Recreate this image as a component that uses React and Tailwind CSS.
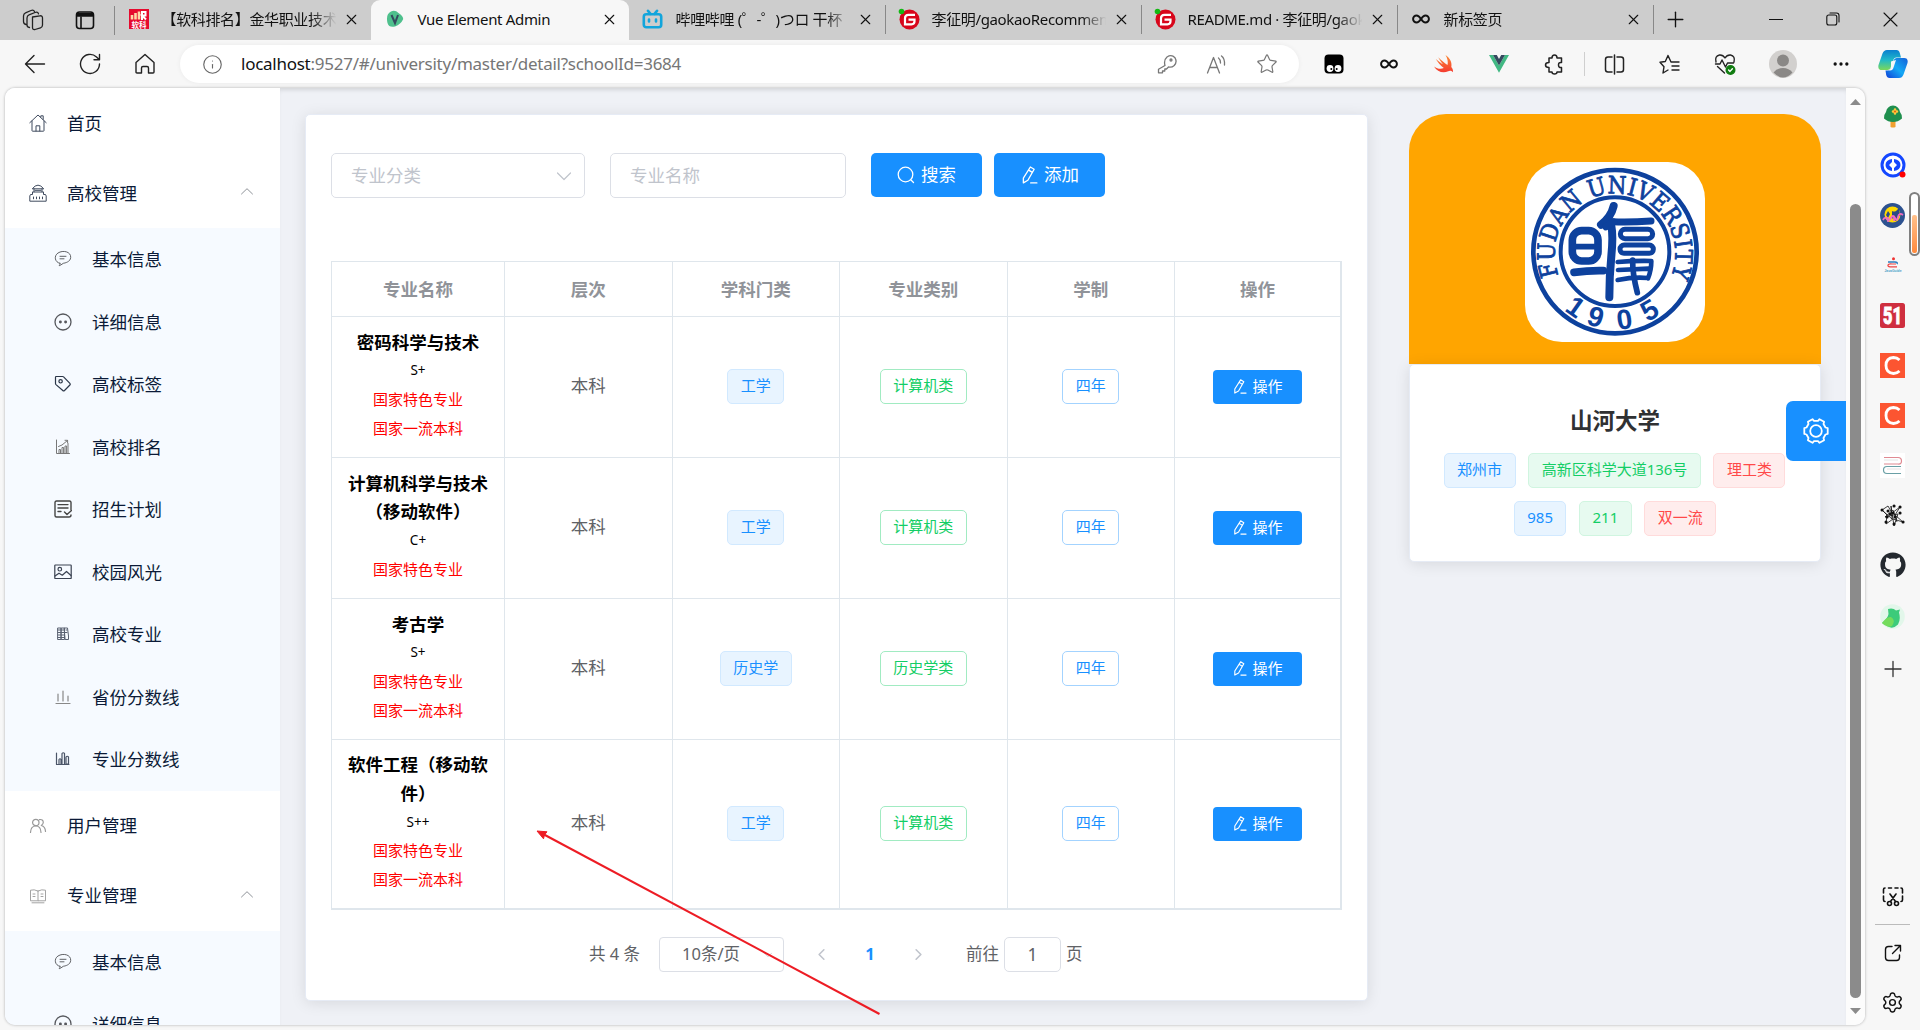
import React from 'react';
import {
  X, Plus, Info, Star, Ellipsis, Settings, ChevronDown, ChevronLeft, ChevronRight,
} from 'lucide-react';
import { FaGithub } from 'react-icons/fa';

/* ---------- generic line icon ---------- */
function Line({ size = 18, box = 18, sw = 1, color = 'currentColor', children, className }) {
  return (
    <svg width={size} height={size} viewBox={`0 0 ${box} ${box}`} fill="none" stroke={color} strokeWidth={sw}
      strokeLinecap="round" strokeLinejoin="round" className={className}>
      {children}
    </svg>
  );
}

/* ---------- sidebar icons ---------- */
const HomeI = () => (
  <Line color="#3f4a5e"><path d="M.8 8.7 9 1l8.2 7.7M3 7v9.6q0 .6.6.6h10.8q.6 0 .6-.6V7M11.8 3V1.8h2.4v3.6M7 17v-5.2h3.8V17" /></Line>
);
const SchoolI = () => (
  <Line color="#3f4a5e"><path d="M3.500 4.500Q9-2.500 14.500 4.500zM5 4.800v3M13 4.800v3M6 6.300h6M4 8h10M3.500 8.200v2.300H1.500L.8 12v5.200h16.400V12l-.7-1.500h-2V8.200M4.500 13v1.800M7.500 13v1.800M10.500 13v1.800M13.500 13v1.800" /></Line>
);
const ChatI = () => (
  <Line color="#606266"><path d="M6 13.300C.6 12.400-.3 5.800 4 3 9-.2 17 1.600 16.700 7.400 16.400 12 11 13 9.300 13.300 7.500 14.500 6 15.600 5.200 15.700c.6-.8.9-1.500.8-2.400M6 6.300h6M6 8.800h4" /></Line>
);
const DotsI = () => (
  <Line color="#55575c" sw={1.3}><circle cx="9" cy="9" r="8" /><circle cx="6.4" cy="9" r=".8" fill="#55575c" /><circle cx="11.6" cy="9" r=".8" fill="#55575c" /></Line>
);
const TagI = () => (
  <Line color="#2b3648" sw={1.2}><path d="M2.200 1.500H8.500q.7 0 1.100.4l6.300 6.400q.8.900 0 1.700l-5.400 5.500q-.9.800-1.700 0L2 9.600q-.5-.5-.5-1.100V2.200q0-.7.7-.7z" /><circle cx="6.600" cy="6.300" r="1.700" /></Line>
);
const RankI = () => (
  <Line color="#777"><path d="M2.500 2v13.500h13M5 15v-3.500h1.500V15M8 15V9.500h1.600V15M11 15V8h1.600v7M14 15V5.500M4.500 8.500 8 7l5.500-4.500M11 2.300h2.600v2.500" /></Line>
);
const PlanI = () => (
  <Line color="#444" sw={1.4}><path d="M17 10V2.500Q17 1 15.500 1h-13Q1 1 1 2.500v13Q1 17 2.500 17H15q2 0 2-2M4 4.600h10M4 8h10M4 11.500h3M10.500 12l2.500 2.500 4.500-4" /></Line>
);
const PicI = () => (
  <Line color="#3a4252" sw={1.2}><rect x=".8" y="2" width="16.400" height="13.500" rx=".6" /><circle cx="5.800" cy="6.200" r="1.800" /><path d="m1 13 4-2.800 3.300 2 4.200-3.700 4.500 4" /></Line>
);
const BooksI = () => (
  <Line color="#5a6272"><path d="M4 3h3v11.500H4zM7.500 3h3v11.500h-3zM10.500 3h3l1 8v3.500h-3zM4 5h6.500M4 7.500h9M4 10h6.500M4 12.500h6.500M12 5h1" /></Line>
);
const BarsI = () => (
  <Line color="#888" sw={1.200}><path d="M2 15.500h14M4 13V6M9 13V3M14 13V8" /></Line>
);
const ColsI = () => (
  <Line color="#4b5568" sw={1.200}><path d="M2.500 3v11.500h12.500M5 14V9.500q1-1.500 2 0V14M8 14V3.500q1.200-1.500 2.500 0V14M12 14V7q1.200-1.500 2.500 0v7z" /></Line>
);
const UsersI = () => (
  <Line color="#999" sw={1.200}><circle cx="6.800" cy="5.500" r="3.200" /><path d="M1.500 15.500q.3-6.500 5.300-6.500t5.200 6.500M10.500 2.600q3.500-.6 3.800 2.700 0 2-2 3.200 4 1 4.200 6" /></Line>
);
const BookI = () => (
  <Line color="#a3a3a3"><path d="M9 4Q5 2 1.500 3.200v10.600H9m0-9.800q4-2 7.500-.8v10.600H9V4M3 15.800h12M4 7h2M4 9.500h2M12 7h2M12 9.500h2" /></Line>
);

const sub1 = [
  [ChatI, '基本信息'], [DotsI, '详细信息'], [TagI, '高校标签'], [RankI, '高校排名'], [PlanI, '招生计划'],
  [PicI, '校园风光'], [BooksI, '高校专业'], [BarsI, '省份分数线'], [ColsI, '专业分数线'],
];

function Item({ Icon, text, arrow }) {
  return (
    <div className="flex h-[70px] shrink-0 items-center bg-white pl-6 pr-[26px]">
      <Icon />
      <span className="ml-5 grow">{text}</span>
      {arrow && <Line size={14} box={14} color="#8f9399" className="mb-1"><path d="m1.500 10 5.500-5.300L12.500 10" /></Line>}
    </div>
  );
}
function Sub({ Icon, text }) {
  return (
    <div className="flex h-[62.5px] shrink-0 items-center pl-[49px]">
      <Icon />
      <span className="ml-5">{text}</span>
    </div>
  );
}

function Sidebar() {
  return (
    <aside className="flex h-full w-[275px] shrink-0 flex-col overflow-hidden bg-[#f6faff] text-[17.5px] text-[#0b1a37]">
      <Item Icon={HomeI} text="首页" />
      <Item Icon={SchoolI} text="高校管理" arrow />
      {sub1.map(([I, t]) => <Sub key={t} Icon={I} text={t} />)}
      <Item Icon={UsersI} text="用户管理" />
      <Item Icon={BookI} text="专业管理" arrow />
      <Sub Icon={ChatI} text="基本信息" />
      <Sub Icon={DotsI} text="详细信息" />
    </aside>
  );
}

/* ---------- browser chrome ---------- */
function Rk() {
  return (
    <svg width="20" height="20" viewBox="0 0 20 20">
      <rect width="20" height="20" fill="#e60a2e" />
      <path d="M3 10.500V6M6.500 10.500V4M10 10.500V2.500" stroke="#ffd9a8" strokeWidth="2.600" />
      <path d="M13 11V3h3.500v3.500H13l4 4" stroke="#fff" strokeWidth="2" fill="none" />
      <text x="10" y="18.500" fontSize="7.500" fontWeight="700" textAnchor="middle" fill="#fff">软科</text>
    </svg>
  );
}
function VueDrop() {
  return (
    <svg width="18" height="18" viewBox="0 0 18 18">
      <path d="M5 1.500Q9-.5 12.500 3 18 7 17 9.500 15 14 9 16.500 3 18 1.500 13-.5 4 5 1.500z" fill="#4fc08d" />
      <path d="M5.500 5 9 13l3-8" fill="none" stroke="#35495e" strokeWidth="2" />
    </svg>
  );
}
function Bili() {
  return (
    <Line size={21} box={21} sw={2.600} color="#12a5dc"><rect x="1.800" y="5.300" width="17.400" height="13" rx="2.500" /><path d="m6 1.800 2.500 3M15 1.800l-2.500 3M7 10.500v2M14 10.500v2" /></Line>
  );
}
function Gitee() {
  return (
    <svg width="22" height="22" viewBox="0 0 22 22">
      <circle cx="11.500" cy="11.500" r="10" fill="#d8061b" />
      <path d="M17 6.800h-6.500q-3.500 0-3.500 3.500v6h6.500q3 0 3-3v-1.600h-6" fill="none" stroke="#fff" strokeWidth="2.200" />
      <circle cx="3.500" cy="3.500" r="2.800" fill="#14b814" />
    </svg>
  );
}
function Inf() {
  return <Line size={18} box={18} sw={2} color="#111"><path d="M9 9C7 6 5.800 5.500 4.600 5.500a3.500 3.500 0 0 0 0 7C5.800 12.500 7 12 9 9s3.200-3.500 4.400-3.500a3.500 3.500 0 0 1 0 7C12.200 12.500 11 12 9 9z" /></Line>;
}
function SwiftBird() {
  return (
    <svg width="20" height="20" viewBox="0 0 20 20">
      <defs><linearGradient id="swf" x1="0" y1="0" x2="0" y2="1"><stop offset="0" stopColor="#fb8a34" /><stop offset="1" stopColor="#f53b30" /></linearGradient></defs>
      <path d="M11.500 1C16 4 18.300 8.600 17.300 13c1.800 2.200 1.900 4.300 1.500 5.300-1.400-2-3.200-1.800-4.600-1.100C9.500 19.500 3 18 0 12.500c3.500 2.500 7 2.900 9.800 1.500C6.500 11.500 3.500 8 1.800 5c3 2.500 5.500 4.400 7.200 5.300C7.500 8.500 5 5 4.200 3.300c3 3 6.500 6 9.300 7.800C14.300 8 13.500 4.300 11.500 1z" fill="url(#swf)" />
    </svg>
  );
}

const tabs = [
  { I: Rk, t: '【软科排名】金华职业技术' },
  { I: VueDrop, t: 'Vue Element Admin', on: true },
  { I: Bili, t: '哔哩哔哩 (゜-゜)つロ 干杯' },
  { I: Gitee, t: '李征明/gaokaoRecommen', sep: true },
  { I: Gitee, t: 'README.md · 李征明/gaok', sep: true },
  { I: Inf, t: '新标签页', sep: true },
];

function TabBar() {
  return (
    <div className="flex h-10 shrink-0 items-end bg-[#cdcdcd] text-[15px] text-[#111]">
      <div className="flex h-full w-[115px] items-center pl-[22px]">
        <Line size={22} box={22} sw={1.300} color="#222"><path d="m10.500 8 7.500-1.200q2.500-.3 2.500 2.200v7q0 2.200-2 2.800l-5.500 1.700q-2.500.5-2.500-2zM7.500 18.500q-2.500-.3-2.500-2.500V9Q5 6.500 7 5.800L13 3.500q3-1 3.500 1.300M4 15.500Q1.500 15 1.500 12.500V7Q1.500 4.500 3.500 3.800L9 1.500q2.500-1 3.500 1" /></Line>
        <Line size={20} box={20} sw={1.600} color="#111" className="ml-[31px]"><rect x="1.500" y="2" width="17" height="16.500" rx="3" /><path d="M2.500 4h15v1.500h-15z" fill="#111" strokeWidth="2.500" /><path d="M6 7v11" /></Line>
        <div className="ml-[19px] h-[29px] w-px bg-[#888]" />
      </div>
      {tabs.map(({ I, t, on, sep }, i) => (
        <div key={i} className={on
          ? 'flex h-10 w-[258px] items-center rounded-t-[9px] bg-[#f7f7f7] pb-[2px]'
          : 'flex h-10 w-[256px] items-center pb-[2px]'}>
          <div className="flex w-[46.5px] items-center">
            <div className={sep ? 'h-[29px] w-px bg-[#888]' : 'h-6 w-px'} />
            <div className="flex w-[45.5px] justify-center"><I /></div>
          </div>
          <div className={on
            ? 'w-[180px] whitespace-nowrap tracking-[-0.33px]'
            : 'w-[178px] whitespace-nowrap tracking-[-0.35px] [mask-image:linear-gradient(to_right,#000_84%,transparent_98%)]'}>{t}</div>
          <div className="flex w-[24px] justify-center"><X size={17} strokeWidth={1.600} /></div>
        </div>
      ))}
      <div className="flex h-10 grow items-center pb-[2px]">
        <div className="h-[29px] w-px bg-[#888]" />
        <Plus size={25} strokeWidth={1.300} className="ml-[9px]" />
        <div className="flex grow items-center justify-end gap-[43px] pr-[22px]">
          <Line size={14} box={14} color="#111" sw={1.200}><path d="M.5 7.500h13" /></Line>
          <Line size={14} box={14} color="#111" sw={1.100}><rect x=".8" y="3" width="10" height="10" rx="2" /><path d="M4 1h6.500Q13 1 13 3.500V10" /></Line>
          <Line size={15} box={15} color="#111" sw={1.100}><path d="m1 1 13 13M14 1 1 14" /></Line>
        </div>
      </div>
    </div>
  );
}

const Slot = ({ children }) => <div className="flex w-[55px] shrink-0 items-center justify-center">{children}</div>;

function Toolbar() {
  return (
    <div className="flex h-12 shrink-0 items-center bg-[#f7f7f7] pl-[7px] text-[#222]">
      <Slot><Line size={22} box={22} sw={1.400}><path d="M20.500 11H1.500M10 2.500 1.500 11l8.500 8.500" /></Line></Slot>
      <Slot><Line size={22} box={22} sw={1.400}><path d="M20.500 11a9.500 9.500 0 1 1-3-7l2.700 2.500M20.500 1.500v5.300H15" /></Line></Slot>
      <Slot><Line size={22} box={22} sw={1.400}><path d="M2 9.500 11 1.500l9 8V19q0 1-1 1h-4.500v-5q0-1.500-1.500-1.500h-4Q7.500 13.500 7.500 15v5H3q-1 0-1-1z" /></Line></Slot>
      <div className="ml-2 flex h-[38px] w-[1119px] shrink-0 items-center rounded-full bg-white pl-[22px] pr-[21px] shadow-[0_0_5px_rgba(0,0,0,0.06)]">
        <Info size={21} strokeWidth={1.300} color="#666" />
        <span className="ml-[18px] grow whitespace-nowrap text-[17px] tracking-[-0.26px] text-[#767676]"><span className="text-[#111]">localhost</span>:9527/#/university/master/detail?schoolId=3684</span>
        <div className="flex items-center gap-[29px] text-[#777]">
          <Line size={20} box={20} sw={1.300}><path d="M8 11.500Q6.500 6 10 3q4.500-3 8 .8 2.500 4-.8 7.700-2.500 2.300-5.700 1.500L9.500 15H7.800v2H5.500v1.800H1.500v-3.500z" /><circle cx="14" cy="6" r="1" /></Line>
          <Line size={21} box={21} sw={1.300}><path d="M1.500 19 7.500 3.500 13.500 19M3.800 13.500h7.500M12.500 4q2 1.500 2 5M15.500 2q3.500 2.500 3 9" /></Line>
          <Star size={22} strokeWidth={1.300} />
        </div>
      </div>
      <div className="ml-[7px] flex grow items-center">
        <Slot>
          <svg width="20" height="20" viewBox="0 0 20 20"><rect x=".5" y=".5" width="19" height="19" rx="4" fill="#000" /><circle cx="6" cy="14.500" r="3.400" fill="#fff" /><circle cx="14" cy="14.500" r="3.400" fill="#fff" /><circle cx="7.300" cy="15" r="1" /><circle cx="12.700" cy="15" r="1" /></svg>
        </Slot>
        <Slot><Inf /></Slot>
        <Slot><SwiftBird /></Slot>
        <Slot>
          <svg width="20" height="18" viewBox="0 0 20 18"><path d="M0 0h4l6 10.500L16 0h4L10 17.800z" fill="#41b883" /><path d="M4 0h3.800L10 4l2.200-4H16l-6 10.500z" fill="#34495e" /></svg>
        </Slot>
        <Slot><Line size={21} box={21} sw={1.500} className="ml-[2px]"><path d="M5 4h3q0-3 2.500-3T13 4h4.500v4.500q-3-.5-3 2.500t3 2.500V18H13q0 2-2.500 2T8 18H5v-4.500q-3.500 0-3.500-2.500T5 8.500z" /></Line></Slot>
        <div className="mx-[2.500px] h-6 w-px bg-[#cfcfcf]" />
        <Slot><Line size={21} box={21} sw={1.500}><path d="M8 3H4Q1.500 3 1.500 5.500v10Q1.500 18 4 18h4M13 3h4q2.500 0 2.500 2.500v10q0 2.500-2.500 2.500h-4M10.500 1v19" /></Line></Slot>
        <Slot><Line size={21} box={21} sw={1.400}><path d="M12 8 9 1.500 6.300 7.500 1 8.200l4 4.500L4 19l5-3M12 8h8M13 12h7M13 16h7" /></Line></Slot>
        <Slot>
          <Line size={22} box={22} sw={1.400}><path d="M2 9Q.5 3 5.500 2q3.500-.3 5.500 3 2-3.300 5.500-3 5 1 3.500 7M1.500 11H6l2-4 3.500 7L13.500 10h6M3.500 13.500l7 6.500" /><circle cx="16.500" cy="17" r="4.300" fill="#107c10" stroke="#107c10" /><path d="m14.600 17 1.400 1.400 2.400-2.600" stroke="#fff" /></Line>
        </Slot>
        <div className="flex w-[61px] justify-center">
          <svg width="28" height="28" viewBox="0 0 28 28"><circle cx="14" cy="14" r="14" fill="#d2d0ce" /><circle cx="14" cy="10.500" r="6" fill="#8a8886" /><path d="M4.500 22.500Q8 18 14 18t9.500 4.500Q19 27.500 14 27.500t-9.500-5z" fill="#8a8886" /></svg>
        </div>
        <Slot><Ellipsis size={20} strokeWidth={2} color="#111" /></Slot>
        <div className="flex w-[50px] justify-center">
          <svg width="30" height="28" viewBox="0 0 30 28">
            <defs>
              <linearGradient id="cpa" x1="0" y1="0" x2="0" y2="1"><stop offset="0" stopColor="#0a7fd0" /><stop offset=".5" stopColor="#1fb9c8" /><stop offset="1" stopColor="#7bd85a" /></linearGradient>
              <linearGradient id="cpb" x1="0" y1="1" x2="1" y2="0"><stop offset="0" stopColor="#0f3fd8" /><stop offset=".5" stopColor="#14a9f5" /><stop offset="1" stopColor="#1560d8" /></linearGradient>
            </defs>
            <path d="M9 0h9.500q2.500 0 3.300 3L23 7.500H18q-2 0-3 3l-2.500 7.500q-.8 2-3 2H4q-4.500 0-3.500-5L4.500 3.500Q5.800 0 9 0z" fill="url(#cpa)" />
            <path d="M21 28H11.500q-2.500 0-3.300-3L7.500 20.500h2.500q2 0 3-3l2.500-7q.8-2.500 3-2.500H26q4.500 0 3.500 5L25.500 24.500Q24.200 28 21 28z" fill="url(#cpb)" />
            <path d="m13 11.500 5-1.500-2.800 8.500q-.8 2-3 2H10q2 0 3-3z" fill="#f7f7f7" />
          </svg>
        </div>
      </div>
    </div>
  );
}

/* ---------- main card ---------- */
const Pen = ({ size }) => (
  <Line size={size} box={16} sw={1.200}><path d="M9.200.9 12.600 2.900 7 12.700 3 15 3 10.700zM7.700 3.600l3.300 2M9.500 15h5.500" /></Line>
);

function STag({ kind, children }) {
  const base = 'flex h-[35px] items-center justify-center whitespace-nowrap rounded-[5px] border px-[12.5px] pb-[3px] text-[15px] ';
  const kinds = {
    blue: 'border-[#d1e9ff] bg-[#e8f4ff] text-[#1890ff]',
    green: 'border-[#d0f5e0] bg-[#e7faf0] text-[#13ce66]',
    red: 'border-[#ffdbdb] bg-[#ffeded] text-[#ff4949]',
    greenPlain: 'border-[#a1ebc2] bg-white text-[#13ce66]',
    bluePlain: 'border-[#a3d3ff] bg-white text-[#1890ff]',
  };
  return <span className={base + kinds[kind]}>{children}</span>;
}

const F = '国家特色专业';
const Y = '国家一流本科';
const rows = [
  { n: ['密码科学与技术'], g: 'S+', r: [F, Y], a: '工学', b: '计算机类', h: 'h-[141px]' },
  { n: ['计算机科学与技术', '（移动软件）'], g: 'C+', r: [F], a: '工学', b: '计算机类', h: 'h-[141px]' },
  { n: ['考古学'], g: 'S+', r: [F, Y], a: '历史学', b: '历史学类', h: 'h-[141px]' },
  { n: ['软件工程（移动软', '件）'], g: 'S++', r: [F, Y], a: '工学', b: '计算机类', h: 'h-[169px]' },
];
const GRID = 'grid grid-cols-[173px_167.500px_167.500px_167.500px_167.500px_166px] ';
const CELL = 'flex items-center justify-center border-r border-b border-[#dfe6ec] ';

function Table() {
  return (
    <div className="mt-[63px] w-[1011px] border border-[#dfe6ec]">
      <div className={GRID + 'h-[55px] text-[17.5px] font-bold text-[#909399]'}>
        {['专业名称', '层次', '学科门类', '专业类别', '学制', '操作'].map((t) => <div key={t} className={CELL}>{t}</div>)}
      </div>
      {rows.map((r, i) => (
        <div key={i} className={GRID + r.h}>
          <div className={CELL + 'flex-col pb-[4px]'}>
            {r.n.map((t) => <div key={t} className="h-[28.700px] whitespace-nowrap text-[17.5px] font-bold leading-[28.700px] text-black">{t}</div>)}
            <div className="h-[28.700px] text-[13.500px] leading-[28.700px] text-black">{r.g}</div>
            {r.r.map((t) => <div key={t} className="h-[28.700px] text-[15px] leading-[28.700px] text-[#ff0000]">{t}</div>)}
          </div>
          <div className={CELL + 'pb-[3px] text-[17.5px] text-[#606266]'}>本科</div>
          <div className={CELL + 'pb-px'}><STag kind="blue">{r.a}</STag></div>
          <div className={CELL + 'pb-px'}><STag kind="greenPlain">{r.b}</STag></div>
          <div className={CELL + 'pb-px'}><STag kind="bluePlain">四年</STag></div>
          <div className={CELL}>
            <button className="flex h-[34px] w-[89px] items-center justify-center gap-[5px] rounded-[4px] bg-[#1890ff] pb-px text-[15px] text-white"><Pen size={15} />操作</button>
          </div>
        </div>
      ))}
    </div>
  );
}

function Pager() {
  return (
    <div className="ml-[258px] mt-[27px] flex h-[35px] items-center text-[16.500px] text-[#606266]">
      <span className="w-[70px] whitespace-nowrap">共 4 条</span>
      <div className="flex h-[35px] w-[125px] items-center justify-between rounded-[4px] border border-[#dcdfe6] pl-[22px] pr-[8px]">
        <span>10条/页</span>
        <ChevronDown size={14} strokeWidth={1.300} color="#c0c4cc" />
      </div>
      <ChevronLeft size={19} strokeWidth={2} color="#c0c4cc" className="ml-[28px]" />
      <span className="w-[78px] text-center font-bold text-[#1890ff]">1</span>
      <ChevronRight size={19} strokeWidth={2} color="#c0c4cc" />
      <span className="ml-[38px]">前往</span>
      <div className="mx-[5px] flex h-[35px] w-[57px] items-center justify-center rounded-[5px] border border-[#dcdfe6] text-[17.5px]">1</div>
      <span>页</span>
    </div>
  );
}

function MainCard() {
  return (
    <section className="mt-[26px] h-[887px] w-[1063px] shrink-0 rounded-[5px] border border-[#e6ebf5] bg-white pl-[25px] pt-[38px] shadow-[0_2px_15px_rgba(0,0,0,0.1)]">
      <div className="flex h-[45px] text-[17.5px]">
        <div className="flex w-[254px] items-center justify-between rounded-[5px] border border-[#dcdfe6] pl-[19px] pr-[12px] text-[#c0c4cc]">
          专业分类
          <Line size={16} box={16} color="#c0c4cc" sw={1.200}><path d="m1.500 5 6.500 6.500L14.500 5" /></Line>
        </div>
        <div className="ml-[25px] flex w-[236px] items-center rounded-[5px] border border-[#dcdfe6] pl-[19px] text-[#c0c4cc]">专业名称</div>
        <button className="ml-[25px] flex h-11 w-[111px] items-center justify-center gap-[6px] rounded-[5px] bg-[#1890ff] pb-px text-white">
          <Line size={18} box={18} sw={1.300}><circle cx="8.500" cy="8.500" r="7.300" /><path d="m14 14 2.500 2.500" /></Line>搜索
        </button>
        <button className="ml-[12px] flex h-11 w-[111px] items-center justify-center gap-[6px] rounded-[5px] bg-[#1890ff] pb-px text-white"><Pen size={18} />添加</button>
      </div>
      <Table />
      <Pager />
    </section>
  );
}

/* ---------- university seal ---------- */
function Seal() {
  return (
    <svg width="180" height="180" viewBox="405 216 540 540" fill="none" stroke="#0d419d" strokeLinecap="round" strokeLinejoin="round">
      <defs><path id="ring" d="M 506 556 A 181 181 0 1 1 844 556" /></defs>
      <circle cx="675" cy="485" r="245" strokeWidth="14" />
      <circle cx="675" cy="485" r="163" strokeWidth="12" />
      <text fill="#0d419d" stroke="#0d419d" strokeWidth="2.500" fontSize="72" fontFamily='"DejaVu Serif", "Liberation Serif", serif'>
        <textPath href="#ring" textLength="706" lengthAdjust="spacingAndGlyphs">FUDAN UNIVERSITY</textPath>
      </text>
      <g fill="#0d419d" stroke="none" fontSize="84" fontWeight="700" fontFamily='"Liberation Sans", sans-serif' textAnchor="middle">
        <text transform="translate(557 650) rotate(35)" y="29">1</text>
        <text transform="translate(617 680) rotate(17)" y="29">9</text>
        <text transform="translate(703 688) rotate(-8)" y="29">0</text>
        <text transform="translate(778 660) rotate(-30)" y="29">5</text>
      </g>
      <rect x="547" y="422" width="77" height="91" rx="28" strokeWidth="23" />
      <path d="M550 470h72" strokeWidth="17" />
      <path d="M552 547q45-6 88-5" strokeWidth="23" />
      <path d="M671 348q-8 34-38 56" strokeWidth="24" />
      <path d="M664 408q6 30 0 90t-6 124" strokeWidth="24" />
      <path d="M668 395q50 2 115-2" strokeWidth="21" />
      <path d="M648 410 670 396" strokeWidth="22" />
      <rect x="691" y="418" width="97" height="28" rx="14" strokeWidth="15" />
      <rect x="690" y="465" width="100" height="25" rx="12" strokeWidth="15" />
      <path d="M683 516q45 -4 101 -3q0 28 -10 52M684 540q50-2 92-4M683 570q50-10 90-6" strokeWidth="14" />
      <path d="M728 510q-1 40 14 98" strokeWidth="17" />
    </svg>
  );
}

function Profile() {
  return (
    <section className="ml-[41px] mt-[26px] w-[412px] shrink-0">
      <div className="flex h-[250px] justify-center rounded-t-[37px] bg-[#ffa500] pt-[48px]">
        <div className="h-[180px] w-[180px] overflow-hidden rounded-[37px] bg-white"><Seal /></div>
      </div>
      <div className="flex h-[198px] flex-col items-center rounded-[5px] border border-[#e6ebf5] bg-white shadow-[0_2px_15px_rgba(0,0,0,0.1)]">
        <div className="mt-[39px] h-[34px] text-[22.500px] font-bold leading-[34px] text-[#303133]">山河大学</div>
        <div className="mt-[15px] flex gap-[12.5px] pr-px">
          <STag kind="blue">郑州市</STag><STag kind="green">高新区科学大道136号</STag><STag kind="red">理工类</STag>
        </div>
        <div className="mt-[13px] flex gap-[12.5px]">
          <STag kind="blue">985</STag><STag kind="green">211</STag><STag kind="red">双一流</STag>
        </div>
      </div>
    </section>
  );
}

/* ---------- browser side rail ---------- */
const Cell50 = ({ children }) => <div className="flex h-[50px] w-full shrink-0 items-center justify-center">{children}</div>;
const CLogo = () => (
  <svg width="25" height="25" viewBox="0 0 25 25"><rect width="25" height="25" fill="#fc5531" /><path d="M19.500 7Q17 4.500 13.500 4.500 6 5 6 12.500t7.500 8q3.500 0 6-2.500" fill="none" stroke="#fff" strokeWidth="2.800" /></svg>
);

function Rail() {
  return (
    <div className="relative flex w-[55px] shrink-0 flex-col items-center pt-[2px] text-[#222]">
      <Cell50>
        <svg width="20" height="23" viewBox="0 0 20 23" className="mt-[2px]"><path d="M7.500 15h5v7q-2.500 1.200-5 0z" fill="#f0a030" /><path d="M10 .5Q16 1 17 7q2.500 3 2 6.500Q15 17 10 17T1 13.500Q.5 10 3 7 4 1 10 .5z" fill="#1f8f4e" /><path d="M12 4.500v4M10 6.500h4" stroke="#ffc83d" strokeWidth="2.600" strokeLinecap="round" /><circle cx="12" cy="6.500" r="1" fill="#e8590c" /></svg>
      </Cell50>
      <Cell50>
        <svg width="26" height="26" viewBox="0 0 26 26"><circle cx="13" cy="13" r="11" fill="#fff" stroke="#1447ff" strokeWidth="3" /><path d="M12 7q-6.500 1-6.500 6t6.500 6v-3L9 13l3-3zM14 7q6.500 1 6.500 6t-6.500 6v-3l3-3-3-3z" fill="#1447ff" /><circle cx="22.500" cy="22.500" r="3" fill="#f00" /></svg>
      </Cell50>
      <Cell50>
        <svg width="25" height="25" viewBox="0 0 25 25"><circle cx="12.500" cy="12.500" r="12.500" fill="#2d5290" /><circle cx="12.500" cy="11.500" r="8" fill="#ffd900" /><path d="M12 8q2 1 4 0l3-3 1 7-4 6-4-3zM8 8l2 3-2 4-2-3z" fill="#2b4a85" /><path d="M3 17q2-4 4-1t4-1 4 0 3-1 5-2M8 14v5M14 13v5" stroke="#f06cc0" strokeWidth="1.800" fill="none" /></svg>
      </Cell50>
      <Cell50>
        <svg width="18" height="16" viewBox="0 0 18 16" fill="none"><circle cx="9.500" cy="1.800" r="1.500" fill="#e33" /><path d="M4 5h7q3 .3 2 2" stroke="#2c7fc0" strokeWidth="1.500" /><path d="M13 9.800H6Q3.500 9.500 4 8t4-1h4" stroke="#e44" strokeWidth="1.200" /><text x="9" y="15.300" fontSize="4.300" fontWeight="700" textAnchor="middle" fill="#4aa0c8" fontFamily='"Liberation Sans", sans-serif' textLength="17" lengthAdjust="spacingAndGlyphs">JavaGuide</text></svg>
      </Cell50>
      <Cell50>
        <svg width="25" height="25" viewBox="0 0 25 25"><rect width="25" height="25" rx="2.500" fill="#cf2f3f" /><text x="12.500" y="20.500" fontSize="23" fontWeight="900" textAnchor="middle" fill="#fff" stroke="#fff" strokeWidth=".8" fontFamily='Roboto, "Liberation Sans", sans-serif' textLength="19" lengthAdjust="spacingAndGlyphs">51</text></svg>
      </Cell50>
      <Cell50><CLogo /></Cell50>
      <Cell50><CLogo /></Cell50>
      <Cell50>
        <svg width="25" height="25" viewBox="0 0 25 25" fill="none"><rect width="25" height="25" fill="#fff" /><path d="M4 4.500h14q3.500 0 3.500 3.500T18 11H4" stroke="#e08a92" strokeWidth="1.200" /><path d="M4 7h14M7 16h14" stroke="#e4e4e4" /><path d="M21 13.500H7q-3.500 0-3.500 3.500T7 20.500h14" stroke="#6aa0a6" strokeWidth="1.200" /></svg>
      </Cell50>
      <Cell50>
        <svg width="25" height="22" viewBox="0 0 25 22" stroke="#111" strokeWidth=".8" fill="none"><path d="m2 6 6-4 4 7 8-6-5 8 8 7-10-3-7 5 1-9-5-5 10 9-1-13 3 20 4-12-13 3 8-7 4 12" /><path d="M2 6h.1M8 7h.1M13 9h.1M20 3h.1M14 2h.1M23 18h.1M6 18h.1M14 20h.1M7 13h.1M15 13h.1M20 9h.1M10 10h.1" strokeWidth="3" strokeLinecap="round" /></svg>
      </Cell50>
      <Cell50><FaGithub size={26} color="#24292f" /></Cell50>
      <Cell50>
        <svg width="25" height="25" viewBox="0 0 25 25" className="mt-[3px]"><circle cx="12.500" cy="12.500" r="12.300" fill="#e2f7ea" /><path d="M8 5q5-1.500 8 1.500l4-1-1 3q2 7-1 12-5 5-10 2L2 19q6-5 6.500-9z" fill="#3ccb7a" /><path d="M2 19q5-7 9-6 5 3 1 9-4 2.500-10-3z" fill="#74dc5c" /></svg>
      </Cell50>
      <Cell50><Line size={18} box={18} color="#333" sw={1.300} className="mt-[8px]"><path d="M9 1.500v15M1 9h16" /></Line></Cell50>
      <div className="flex grow flex-col items-center justify-end">
        <Line size={22} box={22} sw={1.600} color="#111"><path d="M1.500 14V10M1.500 7V3.500Q1.500 2 3 2M6.500 2h3M13 2h3M19 2q1.500 0 1.500 1.500V7M20.500 10v4M8 8l5.500 7.500M14 8l-5.500 7.500M1.500 14q0 1.500 1.500 1.500M20.500 14q0 1.500-1.500 1.500" /><circle cx="7.500" cy="17.500" r="2" /><circle cx="14.500" cy="17.500" r="2" /></Line>
        <div className="mb-[19px] mt-[16px] h-px w-[35px] bg-[#bbb]" />
        <Line size={18} box={18} sw={1.400} color="#111"><path d="M8 2.500H4.500Q1.500 2.500 1.500 5.500v8Q1.500 16.500 4.500 16.500h8q3 0 3-3V11M11 1.500h5.500V7M16 2 8.500 9.500" /></Line>
        <Settings size={23} strokeWidth={1.500} color="#111" className="mb-[16px] mt-[29px]" />
      </div>
      <div className="absolute right-0 top-[104px] flex h-[64px] w-[11px] items-end justify-center rounded-[6px] border-2 border-[#808080] bg-white p-px">
        <div className="h-[38px] w-full rounded-[2px] bg-linear-to-b from-[#ffc08a] to-[#ff8a3c]" />
      </div>
    </div>
  );
}

export default function App() {
  return (
    <div className="relative flex h-[1030px] w-[1920px] flex-col overflow-hidden bg-[#f7f7f7] font-['Noto_Sans','Noto_Sans_CJK_SC',sans-serif]">
      <TabBar />
      <Toolbar />
      <div className="flex min-h-0 grow">
        <div className="mb-[5px] ml-[5px] flex w-[1860px] shrink-0 overflow-hidden rounded-[10px] bg-[#eff1f6] shadow-[0_0_3px_rgba(0,0,0,0.3)]">
          <Sidebar />
          <main className="relative flex min-w-0 grow overflow-hidden pl-[25px] shadow-[inset_0_4px_4px_-2px_rgba(0,0,0,0.12)]">
            <MainCard />
            <Profile />
            <div className="absolute right-0 top-[313px] flex h-[60px] w-[60px] items-center justify-center rounded-l-[7px] bg-[#1890ff]">
              <Line size={28} box={28} sw={1.800} color="#fff"><path d="m10.500 2.200 1.500 1.600h4l1.500-1.600 4.600 2.600-.6 2.200 2 3.500 2.200.6v5.800l-2.200.6-2 3.500.6 2.200-4.600 2.600-1.500-1.600h-4l-1.500 1.600-4.600-2.600.6-2.200-2-3.500-2.200-.6v-5.800l2.200-.6 2-3.500-.6-2.200z" /><circle cx="14" cy="14" r="5.800" /></Line>
            </div>
          </main>
          <div className="flex w-[19px] shrink-0 flex-col items-center bg-[#fcfcfc] pt-[11px]">
            <svg width="11" height="6" viewBox="0 0 11 6"><path d="M5.500 0 11 6H0z" fill="#8b8b8b" /></svg>
            <div className="mt-[99px] h-[794px] w-[11px] rounded-full bg-[#8b8b8b]" />
            <svg width="11" height="6" viewBox="0 0 11 6" className="mt-[10px]"><path d="M5.500 6 11 0H0z" fill="#8b8b8b" /></svg>
          </div>
        </div>
        <Rail />
      </div>
      <svg className="pointer-events-none absolute left-[530px] top-[825px]" width="356" height="196" viewBox="530 825 356 196">
        <path d="M544 834.500 879.500 1014" stroke="#ed1c24" strokeWidth="2" />
        <path d="M537 831l10 .8-2.500 3-1 4z" fill="#ed1c24" stroke="#ed1c24" />
      </svg>
    </div>
  );
}
